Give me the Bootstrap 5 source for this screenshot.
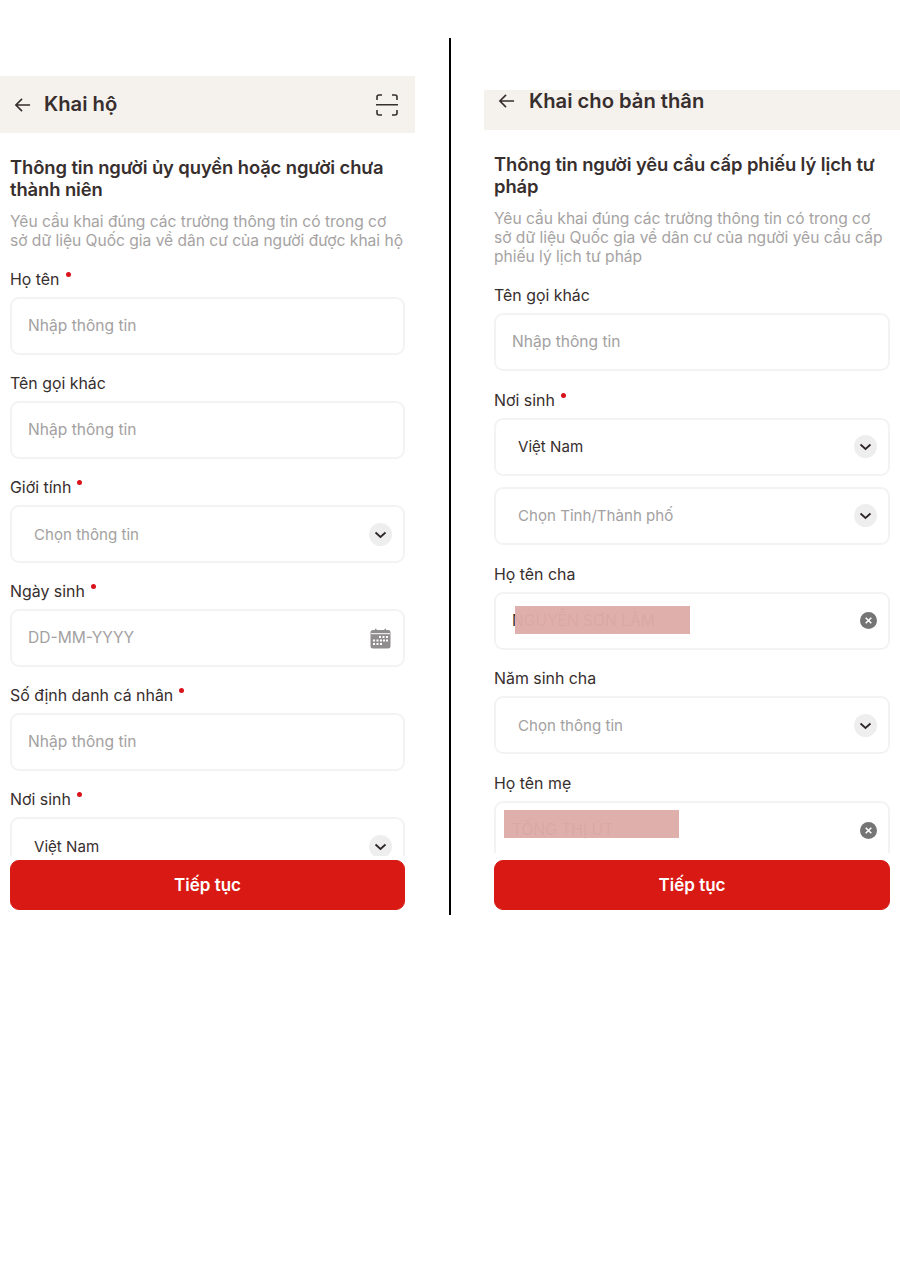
<!DOCTYPE html>
<html lang="vi">

<head>
  <meta charset="utf-8">
  <title>Khai hộ</title>
  <link href="https://cdn.jsdelivr.net/npm/bootstrap@5.3.3/dist/css/bootstrap.min.css" rel="stylesheet">
  <style>
    body { background: #fff; color: #372e2e; font-family: Inter, "Noto Sans", sans-serif; height: 1273px; overflow: hidden; }
    .phone-left { width: 415px; margin-top: 76px; }
    .phone-right { width: 416px; margin-top: 90px; margin-left: 33px; }
    .split-line { width: 2px; height: 877px; margin-top: 38px; margin-left: 34px; background: #000; }
    .top-bar { background: #f5f1ed; }
    .phone-left .top-bar { height: 57px; padding: 0 17px 0 14px; }
    .phone-right .top-bar { height: 40px; padding: 0 14px 18px 14px; }
    .bar-title { font-size: 20.2px; font-weight: 600; margin-left: 14px; line-height: 1; }
    .phone-left .bar-title { margin-left: 13px; }
    .form-scroll { height: 723px; overflow: hidden; padding: 0 10px; }
    .form-heading { font-size: 18.4px; font-weight: 600; line-height: 22px; letter-spacing: -.1px; margin: 23px 0 12px; }
    .form-hint { font-size: 15.6px; line-height: 19px; color: #a6a3a3; margin: 0 0 20px; letter-spacing: -.02px; }
    .field-label { display: block; font-size: 15.9px; line-height: 20px; margin-bottom: 7px; }
    .req-dot { display: inline-block; width: 5px; height: 5px; border-radius: 50%; background: #d8131b; margin-left: 6px; vertical-align: 8px; }
    .field-box { height: 58px; border: 2px solid #f4f3f2; border-radius: 9px; padding: 0 11px 0 16px; margin-bottom: 19px; background: #fff; font-size: 15.6px; }
    .phone-right .field-box { margin-bottom: 19.8px; }
    .field-box.picker { padding-left: 22px; font-size: 15.1px; }
    .field-box.picker span { padding-top: 2px; }
    .phone-right .field-box.tight { margin-bottom: 11px; }
    .hint-text { color: #a3a1a1; }
    .chev { width: 23px; height: 23px; border-radius: 50%; background: #eeeeee; }
    .clear-ico { width: 17px; height: 17px; border-radius: 50%; background: #757575; }
    .cal-ico { margin-right: 1px; }
    .masked { position: relative; }
    .mask-block { position: absolute; width: 175px; height: 28px; background: rgba(222, 172, 168, .97); }
    .mask-father { left: 19px; top: 12px; }
    .mask-mother { left: 8px; top: 7px; }
    .next-btn { display: block; width: 395px; height: 50px; margin: 4px 0 0 10px; border-radius: 9px; background: #d91a14; border-color: #d91a14; color: #fff; font-size: 17px; font-weight: 600; padding: 1px 0 0; }
    .phone-right .next-btn { width: 396px; margin-top: 7px; }
  </style>
</head>

<body class="m-0">
  <svg width="0" height="0" class="position-absolute">
    <symbol id="arrowBack" viewBox="0 0 18 16"><path d="M17 8H2M8.500 1.500 2 8l6.500 6.500" fill="none" stroke="#372e2e" stroke-width="1.700"/></symbol>
    <symbol id="chevDown" viewBox="0 0 23 23"><path d="M6.500 9.500l5 4.500 5-4.500" fill="none" stroke="#2f2727" stroke-width="1.800"/></symbol>
    <symbol id="clearX" viewBox="0 0 17 17"><path d="M5.700 5.700l5.600 5.600M11.300 5.700l-5.600 5.600" fill="none" stroke="#fff" stroke-width="1.600"/></symbol>
  </svg>

  <div class="d-flex align-items-start">
    <!-- Khai ho -->
    <div class="phone-left">
      <div class="top-bar d-flex align-items-center">
        <svg width="17" height="16"><use href="#arrowBack"/></svg>
        <span class="bar-title flex-grow-1">Khai hộ</span>
        <svg width="22" height="22" viewBox="0 0 22 22" fill="none" stroke="#372e2e" stroke-width="1.600">
          <path d="M1 6V3a2 2 0 0 1 2-2h3M16 1h3a2 2 0 0 1 2 2v3M1 16v3a2 2 0 0 0 2 2h3M21 16v3a2 2 0 0 1-2 2h-3M0 10.700h22"/>
        </svg>
      </div>
      <div class="form-scroll">
        <h2 class="form-heading">Thông tin người ủy quyền hoặc người chưa thành niên</h2>
        <p class="form-hint">Yêu cầu khai đúng các trường thông tin có trong cơ sở dữ liệu Quốc gia về dân cư của người được khai hộ</p>

        <label class="field-label">Họ tên<span class="req-dot"></span></label>
        <div class="field-box d-flex align-items-center"><span class="hint-text">Nhập thông tin</span></div>

        <label class="field-label">Tên gọi khác</label>
        <div class="field-box d-flex align-items-center"><span class="hint-text">Nhập thông tin</span></div>

        <label class="field-label">Giới tính<span class="req-dot"></span></label>
        <div class="field-box picker d-flex align-items-center justify-content-between"><span class="hint-text">Chọn thông tin</span>
          <svg class="chev"><use href="#chevDown"/></svg></div>

        <label class="field-label">Ngày sinh<span class="req-dot"></span></label>
        <div class="field-box d-flex align-items-center justify-content-between"><span class="hint-text">DD-MM-YYYY</span>
          <svg width="21" height="21" viewBox="0 0 21 21" class="cal-ico">
            <path fill="#8f8d8d" d="M3 2h2V.8h1.500V2h8V.8H16V2h2a2.500 2.500 0 0 1 2.500 2.500V18a2.500 2.500 0 0 1-2.500 2.500H3A2.500 2.500 0 0 1 .5 18V4.500A2.500 2.500 0 0 1 3 2z"/>
            <path stroke="#fff" d="M1 5.700h19" />
            <path fill="#fff" d="M9 8h2v2H9zM12.500 8h2v2h-2zM16 8h2v2h-2zM3 11.500h2v2H3zM6.500 11.500h2v2h-2zM10 11.500h2v2h-2zM13 11.500h2v2h-2zM16 11.500h2v2h-2zM3 15h2v2H3zM6.500 15h2v2h-2zM10 15h2v2h-2z"/>
          </svg></div>

        <label class="field-label">Số định danh cá nhân<span class="req-dot"></span></label>
        <div class="field-box d-flex align-items-center"><span class="hint-text">Nhập thông tin</span></div>

        <label class="field-label">Nơi sinh<span class="req-dot"></span></label>
        <div class="field-box picker d-flex align-items-center justify-content-between"><span>Việt Nam</span>
          <svg class="chev"><use href="#chevDown"/></svg></div>
      </div>
      <button type="button" class="btn next-btn">Tiếp tục</button>
    </div>

    <div class="split-line"></div>

    <!-- Khai cho ban than -->
    <div class="phone-right">
      <div class="top-bar d-flex align-items-center">
        <svg width="17" height="16"><use href="#arrowBack"/></svg>
        <span class="bar-title">Khai cho bản thân</span>
      </div>
      <div class="form-scroll">
        <h2 class="form-heading">Thông tin người yêu cầu cấp phiếu lý lịch tư pháp</h2>
        <p class="form-hint">Yêu cầu khai đúng các trường thông tin có trong cơ sở dữ liệu Quốc gia về dân cư của người yêu cầu cấp phiếu lý lịch tư pháp</p>

        <label class="field-label">Tên gọi khác</label>
        <div class="field-box d-flex align-items-center"><span class="hint-text">Nhập thông tin</span></div>

        <label class="field-label">Nơi sinh<span class="req-dot"></span></label>
        <div class="field-box tight picker d-flex align-items-center justify-content-between"><span>Việt Nam</span>
          <svg class="chev"><use href="#chevDown"/></svg></div>
        <div class="field-box picker d-flex align-items-center justify-content-between"><span class="hint-text">Chọn Tỉnh/Thành phố</span>
          <svg class="chev"><use href="#chevDown"/></svg></div>

        <label class="field-label">Họ tên cha</label>
        <div class="field-box masked d-flex align-items-center justify-content-between"><span>NGUYỄN SƠN LÂM</span>
          <div class="mask-block mask-father"></div>
          <svg class="clear-ico"><use href="#clearX"/></svg></div>

        <label class="field-label">Năm sinh cha</label>
        <div class="field-box picker d-flex align-items-center justify-content-between"><span class="hint-text">Chọn thông tin</span>
          <svg class="chev"><use href="#chevDown"/></svg></div>

        <label class="field-label">Họ tên mẹ</label>
        <div class="field-box masked d-flex align-items-center justify-content-between"><span>TỐNG THỊ ÚT</span>
          <div class="mask-block mask-mother"></div>
          <svg class="clear-ico"><use href="#clearX"/></svg></div>
      </div>
      <button type="button" class="btn next-btn">Tiếp tục</button>
    </div>
  </div>
</body>

</html>
